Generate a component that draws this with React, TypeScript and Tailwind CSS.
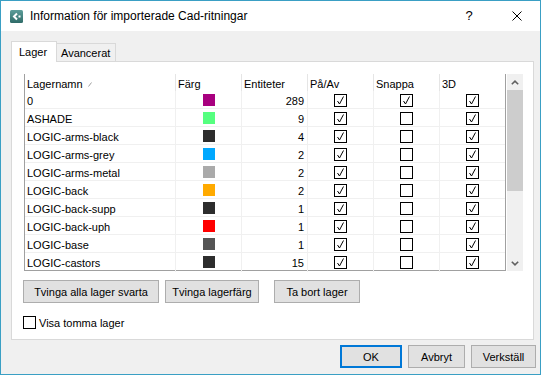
import React from "react";

type Layer = { name: string; color: string; count: number; on: boolean; snap: boolean; d3: boolean };

const layers: Layer[] = [
    { name: "0", color: "#a8007f", count: 289, on: true, snap: true, d3: true },
    { name: "ASHADE", color: "#55ff7f", count: 9, on: true, snap: false, d3: true },
    { name: "LOGIC-arms-black", color: "#2d2d2d", count: 4, on: true, snap: false, d3: true },
    { name: "LOGIC-arms-grey", color: "#00a8ff", count: 2, on: true, snap: false, d3: true },
    { name: "LOGIC-arms-metal", color: "#aaaaaa", count: 2, on: true, snap: false, d3: true },
    { name: "LOGIC-back", color: "#ffaa00", count: 2, on: true, snap: false, d3: true },
    { name: "LOGIC-back-supp", color: "#2d2d2d", count: 1, on: true, snap: false, d3: true },
    { name: "LOGIC-back-uph", color: "#ff0000", count: 1, on: true, snap: false, d3: true },
    { name: "LOGIC-base", color: "#555555", count: 1, on: true, snap: false, d3: true },
    { name: "LOGIC-castors", color: "#2d2d2d", count: 15, on: true, snap: false, d3: true },
];

function Box({ checked }: { checked: boolean }) {
    return (
        <div className="w-[13px] h-[13px] border border-black bg-white flex items-center justify-center">
            {checked && (
                <svg width="11" height="11" viewBox="0 0 11 11">
                    <path d="M2.5 6 L4.5 9 L8.5 1.5" stroke="#000" strokeWidth="1" fill="none" />
                </svg>
            )}
        </div>
    );
}

function Btn({ label, w, primary }: { label: string; w: string; primary?: boolean }) {
    return (
        <button
            className={`${w} h-[23px] bg-[#e1e1e1] text-[11px] text-black flex items-center justify-center pt-px ${primary ? "border-2 border-[#0078d7]" : "border border-[#adadad]"}`}
        >
            {label}
        </button>
    );
}

export default function App() {
    return (
        <div className="w-[541px] h-[375px] border border-[#3a9fc4] flex flex-col font-['Liberation_Sans',Arial,sans-serif] text-black">
            {/* title bar */}
            <div className="h-[30px] bg-white flex items-center pl-[9px] shrink-0">
                <svg width="13" height="13" viewBox="0 0 13 13">
                    <defs>
                        <linearGradient id="ic" x1="0" y1="0" x2="0" y2="1">
                            <stop offset="0" stopColor="#5d9e9a" />
                            <stop offset="1" stopColor="#2f6b68" />
                        </linearGradient>
                    </defs>
                    <rect x="0" y="0" width="13" height="13" rx="1.5" fill="url(#ic)" />
                    <path d="M7 3.5 L4 6.5 L7 9.5" stroke="#fff" strokeWidth="2" fill="none" />
                    <rect x="8.5" y="5.5" width="2" height="2" fill="#fff" />
                </svg>
                <span className="ml-[7px] text-[12px]">Information för importerade Cad-ritningar</span>
                <span className="ml-auto text-[13px] w-[10px] text-center">?</span>
                <div className="ml-[38px] mr-[18px] w-[10px] h-[10px] flex items-center justify-center">
                    <svg width="10" height="10" viewBox="0 0 10 10">
                        <path d="M0.5 0.5 L9.5 9.5 M9.5 0.5 L0.5 9.5" stroke="#000" strokeWidth="1" />
                    </svg>
                </div>
            </div>

            {/* body */}
            <div className="flex-1 bg-[#f0f0f0] pl-[10px] pt-[10px] flex flex-col">
                <div className="flex items-end h-[20px] text-[11px]">
                    <div className="relative z-10 -mb-px w-[46px] h-[21px] bg-white border-l border-t border-r border-[#d9d9d9] flex items-center pl-[7px]">
                        Lager
                    </div>
                    <div className="w-[59px] h-[18px] border-t border-r border-[#d9d9d9] flex items-center pl-[4px] pt-px">
                        Avancerat
                    </div>
                </div>

                <div className="w-[523px] h-[279px] border border-[#d9d9d9] bg-white pl-[12px] pt-[12px] text-[11px]">
                    <div className="flex">
                        <div className="w-[482px] border-l border-r border-[#a0a0a0]">
                            <div className="grid grid-cols-[151px_66px_66px_66px_66px_65px] h-[17px]">
                                <div className="border-r border-[#e5e5e5] pl-[2px] pt-[2px] flex items-center">
                                    Lagernamn
                                    <svg className="ml-[5px]" width="4" height="5" viewBox="0 0 4 5">
                                        <path d="M0.5 4.5 L3.5 0.5" stroke="#a0a0a0" strokeWidth="1" />
                                    </svg>
                                </div>
                                <div className="border-r border-[#e5e5e5] pl-[2px] pt-[2px] flex items-center">Färg</div>
                                <div className="border-r border-[#e5e5e5] pl-[2px] pt-[2px] flex items-center">Entiteter</div>
                                <div className="border-r border-[#e5e5e5] pl-[2px] pt-[2px] flex items-center">På/Av</div>
                                <div className="border-r border-[#e5e5e5] pl-[2px] pt-[2px] flex items-center">Snappa</div>
                                <div className="pl-[2px] pt-[2px] flex items-center">3D</div>
                            </div>
                            {layers.map((l, i) => (
                                <div
                                    key={l.name}
                                    className={`grid grid-cols-[151px_66px_66px_66px_66px_65px] h-[18px] border-b ${i < layers.length - 1 ? "border-[#f0f0f0]" : "border-[#a0a0a0]"}`}
                                >
                                    <div className="border-r border-[#f0f0f0] pl-[2px] pt-[2px] flex items-center">{l.name}</div>
                                    <div className="border-r border-[#f0f0f0] flex items-center justify-center">
                                        <div className="w-[12px] h-[12px]" style={{ backgroundColor: l.color }} />
                                    </div>
                                    <div className="border-r border-[#f0f0f0] pr-[3px] pt-[2px] flex items-center justify-end">{l.count}</div>
                                    <div className="border-r border-[#f0f0f0] flex items-center justify-center"><Box checked={l.on} /></div>
                                    <div className="border-r border-[#f0f0f0] flex items-center justify-center"><Box checked={l.snap} /></div>
                                    <div className="flex items-center justify-center"><Box checked={l.d3} /></div>
                                </div>
                            ))}
                        </div>

                        {/* scrollbar */}
                        <div className="ml-px w-[16px] h-[197px] bg-[#f0f0f0] flex flex-col">
                            <div className="h-[16px] flex items-center justify-center">
                                <svg width="8" height="5" viewBox="0 0 8 5">
                                    <path d="M0.8 4.3 L4 1.2 L7.2 4.3" stroke="#606060" strokeWidth="1.6" fill="none" />
                                </svg>
                            </div>
                            <div className="h-[101px] bg-[#cdcdcd]" />
                            <div className="flex-1" />
                            <div className="h-[16px] flex items-center justify-center">
                                <svg width="8" height="5" viewBox="0 0 8 5">
                                    <path d="M0.8 0.7 L4 3.8 L7.2 0.7" stroke="#606060" strokeWidth="1.6" fill="none" />
                                </svg>
                            </div>
                        </div>
                    </div>

                    <div className="flex -ml-px mt-[9px]">
                        <Btn label="Tvinga alla lager svarta" w="w-[136px]" />
                        <div className="w-[6px]" />
                        <Btn label="Tvinga lagerfärg" w="w-[94px]" />
                        <div className="w-[15px]" />
                        <Btn label="Ta bort lager" w="w-[86px]" />
                    </div>

                    <div className="flex items-center -ml-px mt-[11px]">
                        <Box checked={false} />
                        <span className="ml-[3px] pt-px">Visa tomma lager</span>
                    </div>
                </div>

                <div className="flex justify-end pr-[4px] mt-[5px] gap-[6px]">
                    <Btn label="OK" w="w-[62px]" primary />
                    <Btn label="Avbryt" w="w-[57px]" />
                    <Btn label="Verkställ" w="w-[65px]" />
                </div>
            </div>
        </div>
    );
}
